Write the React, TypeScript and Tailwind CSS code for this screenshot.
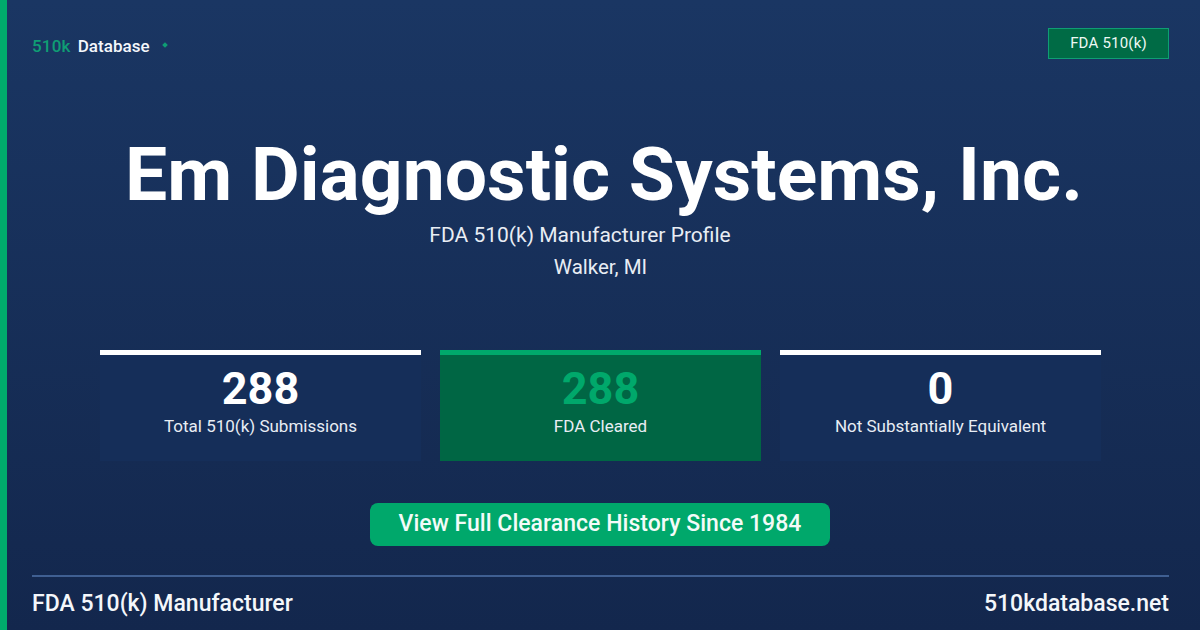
export default function App() {
  const roboto = "font-['Roboto',sans-serif]";
  return (
    <div className={`w-[1200px] h-[630px] overflow-hidden flex bg-gradient-to-b from-[#1a3663] to-[#13274d] text-white ${roboto}`}>
      <div className="w-[7px] shrink-0 bg-[#00ab6c]" />
      <div className="flex-1 flex flex-col pl-[25px] pr-[31px]">
        <div className="flex justify-between items-start pt-[28px] h-[101px]">
          <div className="flex items-center h-[36px] text-[17px] leading-[20px] font-medium">
            <span className="text-[#0f9d74] tracking-[0.2px]">510k</span>
            <span className="ml-[7px] text-[#f4f7fb] tracking-[0.05px]">Database</span>
            <span className="ml-[13px] mb-[3px] w-[4px] h-[4px] rotate-45 bg-[#0f9d74]" />
          </div>
          <div className="w-[121px] h-[31px] flex items-center justify-center border border-[#0f9d74] bg-[#006b45] text-[15px] tracking-[0.2px] text-[#eef8f4]">FDA 510(k)</div>
        </div>
        <h1 className="text-center text-[75px] leading-[84px] font-bold tracking-[0.04px] mt-[31px] ml-[7px] whitespace-nowrap">Em Diagnostic Systems, Inc.</h1>
        <div className="text-center text-[21px] leading-[24px] text-[#e8edf4] mt-[7px] mr-[41px]">FDA 510(k) Manufacturer Profile</div>
        <div className="text-center text-[20.5px] leading-[22px] text-[#e8edf4] mt-[9px]">Walker, MI</div>
        <div className="flex gap-[19px] ml-[68px] mt-[72px]">
          <Stat value="288" label="Total 510(k) Submissions" />
          <Stat value="288" label="FDA Cleared" green />
          <Stat value="0" label="Not Substantially Equivalent" />
        </div>
        <div className="self-center mr-[1px] mt-[42px] w-[460px] h-[43px] rounded-[8px] bg-[#00a86b] flex items-center justify-center text-[23px] tracking-[0.03px] font-medium text-[#f3fbf8]">View Full Clearance History Since 1984</div>
        <div className="mt-[29px] h-[2px] bg-[#3f5f92]" />
        <div className="flex justify-between items-center h-[53px] pt-[2px] text-[23px] font-medium text-[#f4f7fb]">
          <span>FDA 510(k) Manufacturer</span>
          <span>510kdatabase.net</span>
        </div>
      </div>
    </div>
  );
}

function Stat({ value, label, green }: { value: string; label: string; green?: boolean }) {
  return (
    <div className={`w-[321px] h-[111px] border-t-[5px] flex flex-col items-center ${green ? "border-[#00a86b] bg-[#006644]" : "border-white bg-[#152e59]"}`}>
      <div className={`text-[45px] leading-[52px] font-bold mt-[8px] ${green ? "text-[#00a86b]" : "text-white"}`}>{value}</div>
      <div className="text-[17px] leading-[20px] text-[#e8edf4] mt-[1px]">{label}</div>
    </div>
  );
}
